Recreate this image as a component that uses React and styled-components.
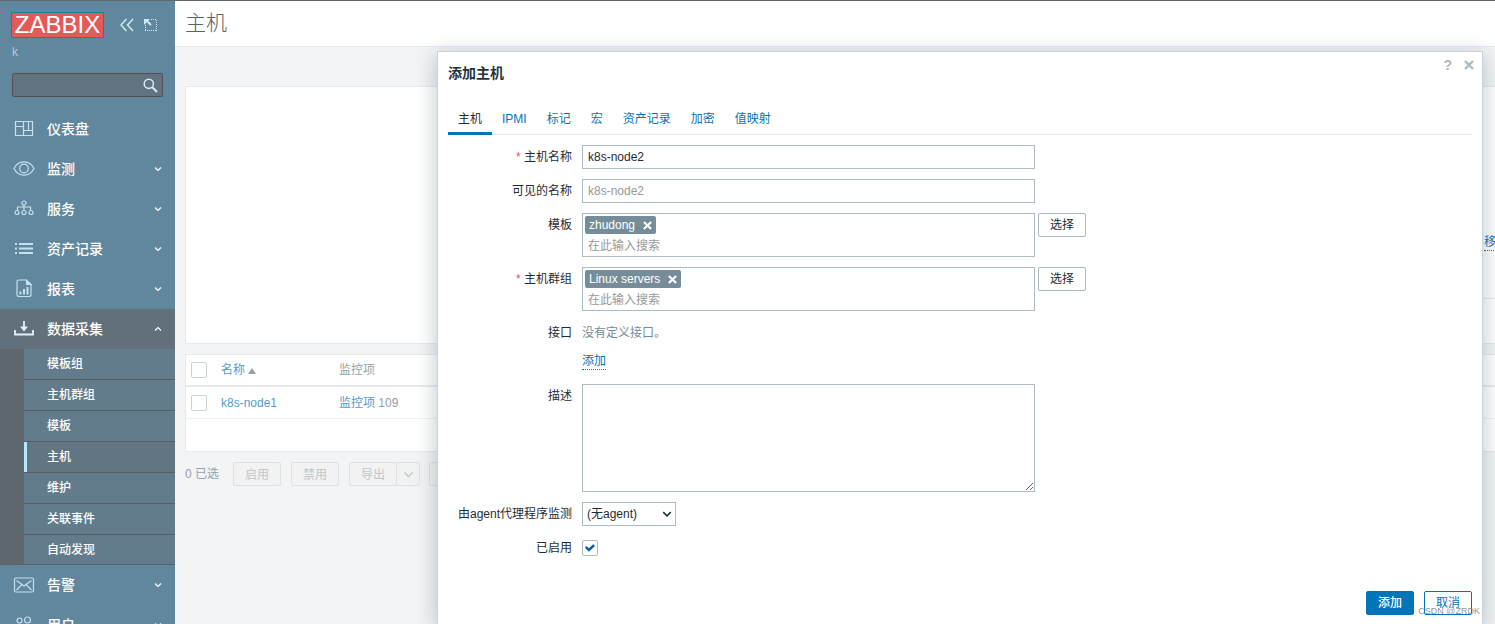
import React from "react";
import styled, { createGlobalStyle, css } from "styled-components";

const GlobalStyle = createGlobalStyle`
  * {
    box-sizing: border-box;
  }

  body {
    margin: 0;
    overflow: hidden;
    background: #f2f4f6;
    color: #1f2c33;
    font-family: "Liberation Sans", "Noto Sans CJK SC", sans-serif;
    font-size: 12px;
    line-height: 18px;
  }

  button, input, select, textarea {
    margin: 0;
    font: inherit;
    color: inherit;
  }

  a {
    color: #0275b8;
    text-decoration: none;
  }
`;

const Page = styled.div`
  display: flex;
  height: 100vh;
  overflow: hidden;
  border-top: 1px solid #62676d;
`;

const Sidebar = styled.aside`
  flex: 0 0 175px;
  background: #60879d;
  color: #fff;
  overflow: hidden;
`;

const SidebarTop = styled.div`
  display: flex;
  align-items: center;
  height: 48px;
  padding: 0 16px 0 11px;
`;

const Logo = styled.a`
  width: 93px;
  height: 26px;
  margin-right: 16px;
  border: 1px solid #1d8099;
  background: #e45959;
  color: #fff;
  font-size: 24px;
  line-height: 24px;
  text-align: center;
`;

const IconButton = styled.button`
  display: flex;
  padding: 0;
  border: 0;
  background: none;
  color: ${(props) => props.$color || "#d3ebf7"};
  cursor: pointer;
`;

const CollapseButton = styled(IconButton)`
  margin-right: 10px;
`;

const ServerName = styled.div`
  margin-top: -6px;
  padding-left: 12px;
  color: #bcc5dc;
`;

const SearchBox = styled.form`
  display: flex;
  align-items: center;
  height: 24px;
  margin: 12px;
  padding-right: 4px;
  border: 1px solid #54504f;
  border-radius: 2px;
  background: #62737f;
`;

const SearchInput = styled.input`
  flex: 1;
  min-width: 0;
  padding: 0 6px;
  border: 0;
  outline: 0;
  background: none;
`;

const NavItem = styled.a`
  display: flex;
  align-items: center;
  height: 40px;
  padding: 0 13px;
  background: ${(props) => (props.$open ? "#61707b" : "none")};
  color: #fff;
  font-size: 14px;
  font-weight: 500;

  span {
    flex: 1;
    margin-left: 12px;
  }
`;

const SubMenu = styled.div`
  border-left: 24px solid #5e676d;
  border-bottom: 1px solid #5b6166;
`;

const SubItem = styled.a`
  display: block;
  height: ${(props) => (props.$last ? "29px" : "31px")};
  padding-left: 23px;
  border-bottom: ${(props) => (props.$last ? "0" : "1px solid #5b5d60")};
  background: ${(props) => (props.$selected ? "#627582" : "#637c8b")};
  box-shadow: ${(props) => (props.$selected ? "inset 3px 0 #b5e8ff" : "none")};
  color: #fff;
  font-weight: 500;
  line-height: 31px;
`;

const Main = styled.main`
  flex: 1;
  min-width: 0;
  overflow: hidden;
`;

const PageHeader = styled.header`
  height: 46px;
  padding-left: 10px;
  border-bottom: 1px solid #e3e8eb;
  background: #fff;

  h1 {
    margin: 0;
    color: #59636a;
    font-size: 21px;
    font-weight: 300;
    line-height: 44px;
  }
`;

/* the list is wider than the window, it runs off on the right */
const Content = styled.div`
  margin: 39px -23px 0 10px;
`;

const FilterPanel = styled.section`
  display: flex;
  flex-direction: column;
  height: 258px;
  border: 1px solid #e6eaed;
  background: #fff;
`;

const FilterRow = styled.div`
  display: flex;
  flex: 1;
  align-items: flex-end;
  justify-content: flex-end;
  padding: 0 9px 47px 0;
`;

const FilterFooter = styled.div`
  height: 45px;
  margin-left: 30%;
  border-top: 1px solid #e6eaed;
`;

const DottedLink = styled.a`
  display: inline-block;
  line-height: 16px;
  border-bottom: 1px dotted #0275b8;
`;

const HostTable = styled.table`
  width: 100%;
  margin-top: 10px;
  border: 1px solid #e6eaed;
  border-collapse: separate;
  border-spacing: 0;
  background: #fff;
  color: #94a1a9;

  th, td {
    height: 32px;
    padding: 0 5px;
    border-bottom: 1px solid #eef1f2;
    text-align: left;
    font-weight: normal;
  }

  th {
    border-bottom: 2px solid #e6eaed;
  }

  tfoot td {
    border-bottom: 0;
  }

  a {
    color: #579ccb;
  }

  th:nth-child(1) {
    width: 30px;
  }

  th:nth-child(2) {
    width: 118px;
  }
`;

const SortArrow = styled.i`
  display: inline-block;
  margin-left: 3px;
  border: 4px solid transparent;
  border-top: 0;
  border-bottom: 6px solid #94a1a9;
`;

const Checkbox = styled.input`
  display: grid;
  place-content: center;
  appearance: none;
  width: 16px;
  height: 16px;
  border: 1px solid ${(props) => (props.$faded ? "#c7d1d6" : "#acbbc2")};
  border-radius: 2px;
  background: #fff;

  &:checked::before {
    content: "";
    width: 10px;
    height: 8px;
    background: #0262a8;
    clip-path: polygon(0 48%, 17% 26%, 38% 52%, 83% 2%, 100% 24%, 38% 98%);
  }
`;

const ActionBar = styled.div`
  display: flex;
  align-items: center;
  margin-top: 10px;
  color: #94a1a9;
  line-height: 24px;
`;

const MutedButton = styled.button`
  width: 48px;
  height: 24px;
  margin-right: 10px;
  padding: 0;
  border: 1px solid #dce2e4;
  border-radius: 2px;
  background: #f2f2f2;
  color: #bcc7cc;

  ${(props) =>
    props.$joined &&
    css`
      margin-right: -1px;
    `}
`;

const SplitButton = styled(MutedButton)`
  display: flex;
  align-items: center;
  justify-content: center;
  width: 24px;
  margin-right: 9px;
`;

const Selected = styled.span`
  width: 48px;
`;

const Modal = styled.section`
  position: absolute;
  top: 51px;
  left: 437px;
  right: 12px;
  padding: 0 10px 10px;
  border: 1px solid #cad4d8;
  background: #fff;
  box-shadow: 0 4px 20px rgba(84, 107, 118, 0.4);
`;

const ModalHeader = styled.header`
  display: flex;
  align-items: flex-start;
  height: 50px;

  h2 {
    flex: 1;
    margin: 12px 0 0;
    color: #1f3541;
    font-size: 14px;
    font-weight: bold;
  }
`;

const ModalTools = styled.div`
  display: flex;
  gap: 12px;
  align-items: center;
  height: 26px;
  margin-right: -2px;
`;

const HelpLink = styled.a`
  color: #acbbc2;
  font-size: 14px;
  font-weight: bold;
`;

const Tabs = styled.nav`
  display: flex;
  height: 33px;
  border-bottom: 1px solid #e6eaed;
`;

const Tab = styled.a`
  height: 33px;
  padding: 0 10px;
  border-bottom: 3px solid ${(props) => (props.$active ? "#0275b8" : "transparent")};
  color: ${(props) => (props.$active ? "#1f2c33" : "#0275b8")};
  line-height: 34px;
`;

const FormGrid = styled.form`
  display: grid;
  grid-template-columns: 124px 1fr;
  gap: 10px;
  padding-top: 10px;
`;

const Label = styled.label`
  line-height: 24px;
  text-align: right;
  white-space: nowrap;

  ${(props) =>
    props.$required &&
    css`
      &::before {
        content: "* ";
        color: #e45959;
      }
    `}
`;

const Field = styled.div`
  display: flex;
  align-items: flex-start;
  gap: 3px;
`;

const fieldBorder = css`
  width: 453px;
  border: 1px solid #acbbc2;
  background: #fff;
  outline: 0;
`;

const TextInput = styled.input`
  ${fieldBorder}
  height: 24px;
  padding: 0 5px;

  &::placeholder {
    color: #999;
  }
`;

const TextArea = styled.textarea`
  ${fieldBorder}
  display: block;
  height: 108px;
  padding: 4px 5px;
`;

const MultiSelect = styled.div`
  ${fieldBorder}
  height: 44px;
  padding: 2px;
`;

const Tag = styled.span`
  display: flex;
  align-items: center;
  gap: 8px;
  width: max-content;
  height: 18px;
  padding: 0 4px;
  border-radius: 2px;
  background: #768d99;
  color: #fff;
`;

const TagInput = styled.input`
  display: block;
  width: 100%;
  height: 22px;
  padding: 2px 3px 0;
  border: 0;
  outline: 0;
  background: none;

  &::placeholder {
    color: #999;
  }
`;

const Button = styled.button`
  width: 48px;
  height: 24px;
  padding: 0;
  border: 1px solid ${(props) => (props.$blue ? "#0275b8" : "#acbbc2")};
  border-radius: 2px;
  background: ${(props) => (props.$primary ? "#0275b8" : "#fff")};
  color: ${(props) => (props.$primary ? "#fff" : props.$blue ? "#0275b8" : "#1f2c33")};
  font-weight: ${(props) => (props.$primary ? "500" : "normal")};
  cursor: pointer;
`;

const Interfaces = styled.div`
  height: 53px;
  color: #768d99;
  line-height: 24px;

  p {
    margin: 0 0 4px;
  }
`;

const SelectWrap = styled.div`
  position: relative;
  width: 94px;

  svg {
    position: absolute;
    top: 7px;
    right: 4px;
    pointer-events: none;
  }
`;

const Select = styled.select`
  appearance: none;
  width: 100%;
  height: 24px;
  padding: 0 4px;
  border: 1px solid #acbbc2;
  background: #fff;
`;

const CheckField = styled.div`
  display: flex;
  align-items: center;
  height: 24px;
`;

const ModalFooter = styled.footer`
  display: flex;
  justify-content: flex-end;
  gap: 10px;
  margin-top: 31px;
`;

const Watermark = styled.div`
  position: absolute;
  right: 15px;
  bottom: 4px;
  color: rgba(120, 120, 120, 0.8);
  font-size: 9px;
  line-height: 18px;
`;

const Chevron = ({ up, size = 8, width = 1.2 }) => (
  <svg width={size} height={size} viewBox="0 0 8 8" fill="none" stroke="currentColor" strokeWidth={width}>
    <path d={up ? "M1 5.5 4 2.5 7 5.5" : "M1 2.5 4 5.5 7 2.5"} />
  </svg>
);

const Cross = ({ size }) => (
  <svg width={size} height={size} viewBox="0 0 10 10" stroke="currentColor" strokeWidth="2.4">
    <path d="M1 1 9 9M9 1 1 9" />
  </svg>
);

const NavIcon = ({ children }) => (
  <svg width="22" height="22" viewBox="0 0 22 22" fill="none" stroke="#c5e1f0" strokeWidth="1.2">
    {children}
  </svg>
);

const icons = {
  dashboard: (
    <NavIcon>
      <path d="M2.5 3.5h17v14h-17zM10.5 3.5v14M2.5 8.5h8M10.5 12.5h9M15.5 3.5v9" />
    </NavIcon>
  ),
  eye: (
    <NavIcon>
      <path d="M1 10.500C5.500 1.700 16.500 1.700 21 10.500 16.500 19.300 5.500 19.300 1 10.500z" />
      <circle cx="11" cy="10.500" r="4.300" />
    </NavIcon>
  ),
  services: (
    <NavIcon>
      <circle cx="11" cy="5" r="2" />
      <circle cx="4" cy="14.500" r="2" />
      <circle cx="11" cy="14.500" r="2" />
      <circle cx="18" cy="14.500" r="2" />
      <path d="M11 7V12.500M4.500 12.500v-3.500h13v3.500" />
    </NavIcon>
  ),
  list: (
    <NavIcon>
      <path strokeWidth="2" d="M2 6h2M6 6h14M2 10.500h2M6 10.500h14M2 15h2M6 15h14" />
    </NavIcon>
  ),
  report: (
    <NavIcon>
      <path d="M6 2h7.500l4.500 4.500v10q0 2-2 2H6q-2 0-2-2v-12.500q0-2 2-2z" />
      <path fill="#c5e1f0" d="M13.500 2.500v4H18z" />
      <path strokeWidth="2" d="M7.500 16.500v-3M11 16.500v-5.500M14.500 16.500V9" />
    </NavIcon>
  ),
  download: (
    <NavIcon>
      <path strokeWidth="1.800" stroke="#e3f1f8" d="M2 12v4.500h18V12M11 3v8" />
      <path fill="#e3f1f8" stroke="none" d="M7 8.500h8L11 13.500z" />
    </NavIcon>
  ),
  mail: (
    <NavIcon>
      <rect x="1.500" y="4" width="19" height="14" rx="1.500" />
      <path d="M3.500 6.500 11 12 18.500 6.500M3.500 16l5-5M18.500 16l-5-5" />
    </NavIcon>
  ),
  users: (
    <NavIcon>
      <circle cx="6.500" cy="6.500" r="2.500" />
      <circle cx="14.500" cy="6" r="3" />
      <path d="M1.500 17q0-6 5-6 3 0 4 2M9 18q0-7 5.500-7t5.500 7" />
    </NavIcon>
  ),
};

const subItems = ["模板组", "主机群组", "模板", "主机", "维护", "关联事件", "自动发现"];

const navItems = [
  { icon: "dashboard", text: "仪表盘", plain: true },
  { icon: "eye", text: "监测" },
  { icon: "services", text: "服务" },
  { icon: "list", text: "资产记录" },
  { icon: "report", text: "报表" },
  { icon: "download", text: "数据采集", children: subItems },
  { icon: "mail", text: "告警" },
  { icon: "users", text: "用户" },
];

const tabs = ["主机", "IPMI", "标记", "宏", "资产记录", "加密", "值映射"];

function Navigation() {
  return (
    <Sidebar>
      <SidebarTop>
        <Logo href="#">ZABBIX</Logo>
        <CollapseButton type="button" aria-label="collapse">
          <svg width="14" height="14" viewBox="0 0 14 14" fill="none" stroke="currentColor" strokeWidth="1.4">
            <path d="M6.500 1 1 7l5.500 6M13 1 7.500 7l5.500 6" />
          </svg>
        </CollapseButton>
        <IconButton type="button" aria-label="compact">
          <svg width="14" height="14" viewBox="0 0 14 14" fill="none" stroke="currentColor">
            <path strokeDasharray="1 1" d="M7 1.500h6M12.500 2v11M1.500 7v6M1 12.500h12" />
            <path strokeWidth="1.800" d="M2 2l5 5" />
            <path fill="currentColor" stroke="none" d="M0 1h6L0 7z" />
          </svg>
        </IconButton>
      </SidebarTop>
      <ServerName>k</ServerName>
      <SearchBox>
        <SearchInput type="text" aria-label="search" />
        <IconButton type="button" aria-label="search">
          <svg width="15" height="15" viewBox="0 0 15 15" fill="none" stroke="currentColor" strokeWidth="1.500">
            <circle cx="5.800" cy="5.800" r="4.600" />
            <path strokeWidth="2" d="M9.300 9.300 14 14" />
          </svg>
        </IconButton>
      </SearchBox>
      {navItems.map((item) => (
        <React.Fragment key={item.text}>
          <NavItem href="#" $open={!!item.children}>
            {icons[item.icon]}
            <span>{item.text}</span>
            {!item.plain && <Chevron up={!!item.children} />}
          </NavItem>
          {item.children && (
            <SubMenu>
              {item.children.map((text, i) => (
                <SubItem
                  href="#"
                  key={text}
                  $selected={text === "主机"}
                  $last={i === item.children.length - 1}
                >
                  {text}
                </SubItem>
              ))}
            </SubMenu>
          )}
        </React.Fragment>
      ))}
    </Sidebar>
  );
}

function HostList() {
  return (
    <Main>
      <PageHeader>
        <h1>主机</h1>
      </PageHeader>
      <Content>
        <FilterPanel>
          <FilterRow>
            <DottedLink href="#">移除</DottedLink>
          </FilterRow>
          <FilterFooter />
        </FilterPanel>
        <HostTable>
          <thead>
            <tr>
              <th>
                <Checkbox type="checkbox" aria-label="all" $faded />
              </th>
              <th>
                <a href="#">名称</a>
                <SortArrow />
              </th>
              <th>监控项</th>
            </tr>
          </thead>
          <tbody>
            <tr>
              <td>
                <Checkbox type="checkbox" aria-label="k8s-node1" $faded />
              </td>
              <td>
                <a href="#">k8s-node1</a>
              </td>
              <td>
                <a href="#">监控项</a> 109
              </td>
            </tr>
          </tbody>
          <tfoot>
            <tr>
              <td colSpan="3" />
            </tr>
          </tfoot>
        </HostTable>
        <ActionBar>
          <Selected>0 已选</Selected>
          <MutedButton disabled>启用</MutedButton>
          <MutedButton disabled>禁用</MutedButton>
          <MutedButton disabled $joined>
            导出
          </MutedButton>
          <SplitButton disabled aria-label="export">
            <Chevron size={11} width={1} />
          </SplitButton>
          <MutedButton disabled aria-label="more" />
        </ActionBar>
      </Content>
    </Main>
  );
}

function TagField({ id, tag }) {
  return (
    <Field>
      <MultiSelect>
        <Tag>
          {tag}
          <IconButton type="button" aria-label="remove" $color="#fff">
            <Cross size={9} />
          </IconButton>
        </Tag>
        <TagInput id={id} type="text" placeholder="在此输入搜索" />
      </MultiSelect>
      <Button type="button">选择</Button>
    </Field>
  );
}

function HostDialog() {
  return (
    <Modal role="dialog">
      <ModalHeader>
        <h2>添加主机</h2>
        <ModalTools>
          <HelpLink href="#">?</HelpLink>
          <IconButton type="button" aria-label="close" $color="#acbbc2">
            <Cross size={10} />
          </IconButton>
        </ModalTools>
      </ModalHeader>
      <Tabs>
        {tabs.map((text, i) => (
          <Tab href="#" key={text} $active={i === 0}>
            {text}
          </Tab>
        ))}
      </Tabs>
      <FormGrid>
        <Label htmlFor="host" $required>
          主机名称
        </Label>
        <TextInput id="host" type="text" defaultValue="k8s-node2" />

        <Label htmlFor="visible">可见的名称</Label>
        <TextInput id="visible" type="text" placeholder="k8s-node2" />

        <Label htmlFor="templates">模板</Label>
        <TagField id="templates" tag="zhudong" />

        <Label htmlFor="groups" $required>
          主机群组
        </Label>
        <TagField id="groups" tag="Linux servers" />

        <Label as="span">接口</Label>
        <Interfaces>
          <p>没有定义接口。</p>
          <DottedLink href="#">添加</DottedLink>
        </Interfaces>

        <Label htmlFor="description">描述</Label>
        <TextArea id="description" />

        <Label htmlFor="proxy">由agent代理程序监测</Label>
        <SelectWrap>
          <Select id="proxy">
            <option>(无agent)</option>
          </Select>
          <Chevron size={10} />
        </SelectWrap>

        <Label htmlFor="enabled">已启用</Label>
        <CheckField>
          <Checkbox id="enabled" type="checkbox" defaultChecked />
        </CheckField>
      </FormGrid>
      <ModalFooter>
        <Button type="button" $primary $blue>
          添加
        </Button>
        <Button type="button" $blue>
          取消
        </Button>
      </ModalFooter>
    </Modal>
  );
}

export default function App() {
  return (
    <Page>
      <GlobalStyle />
      <Navigation />
      <HostList />
      <HostDialog />
      <Watermark>CSDN @ZRDK</Watermark>
    </Page>
  );
}
